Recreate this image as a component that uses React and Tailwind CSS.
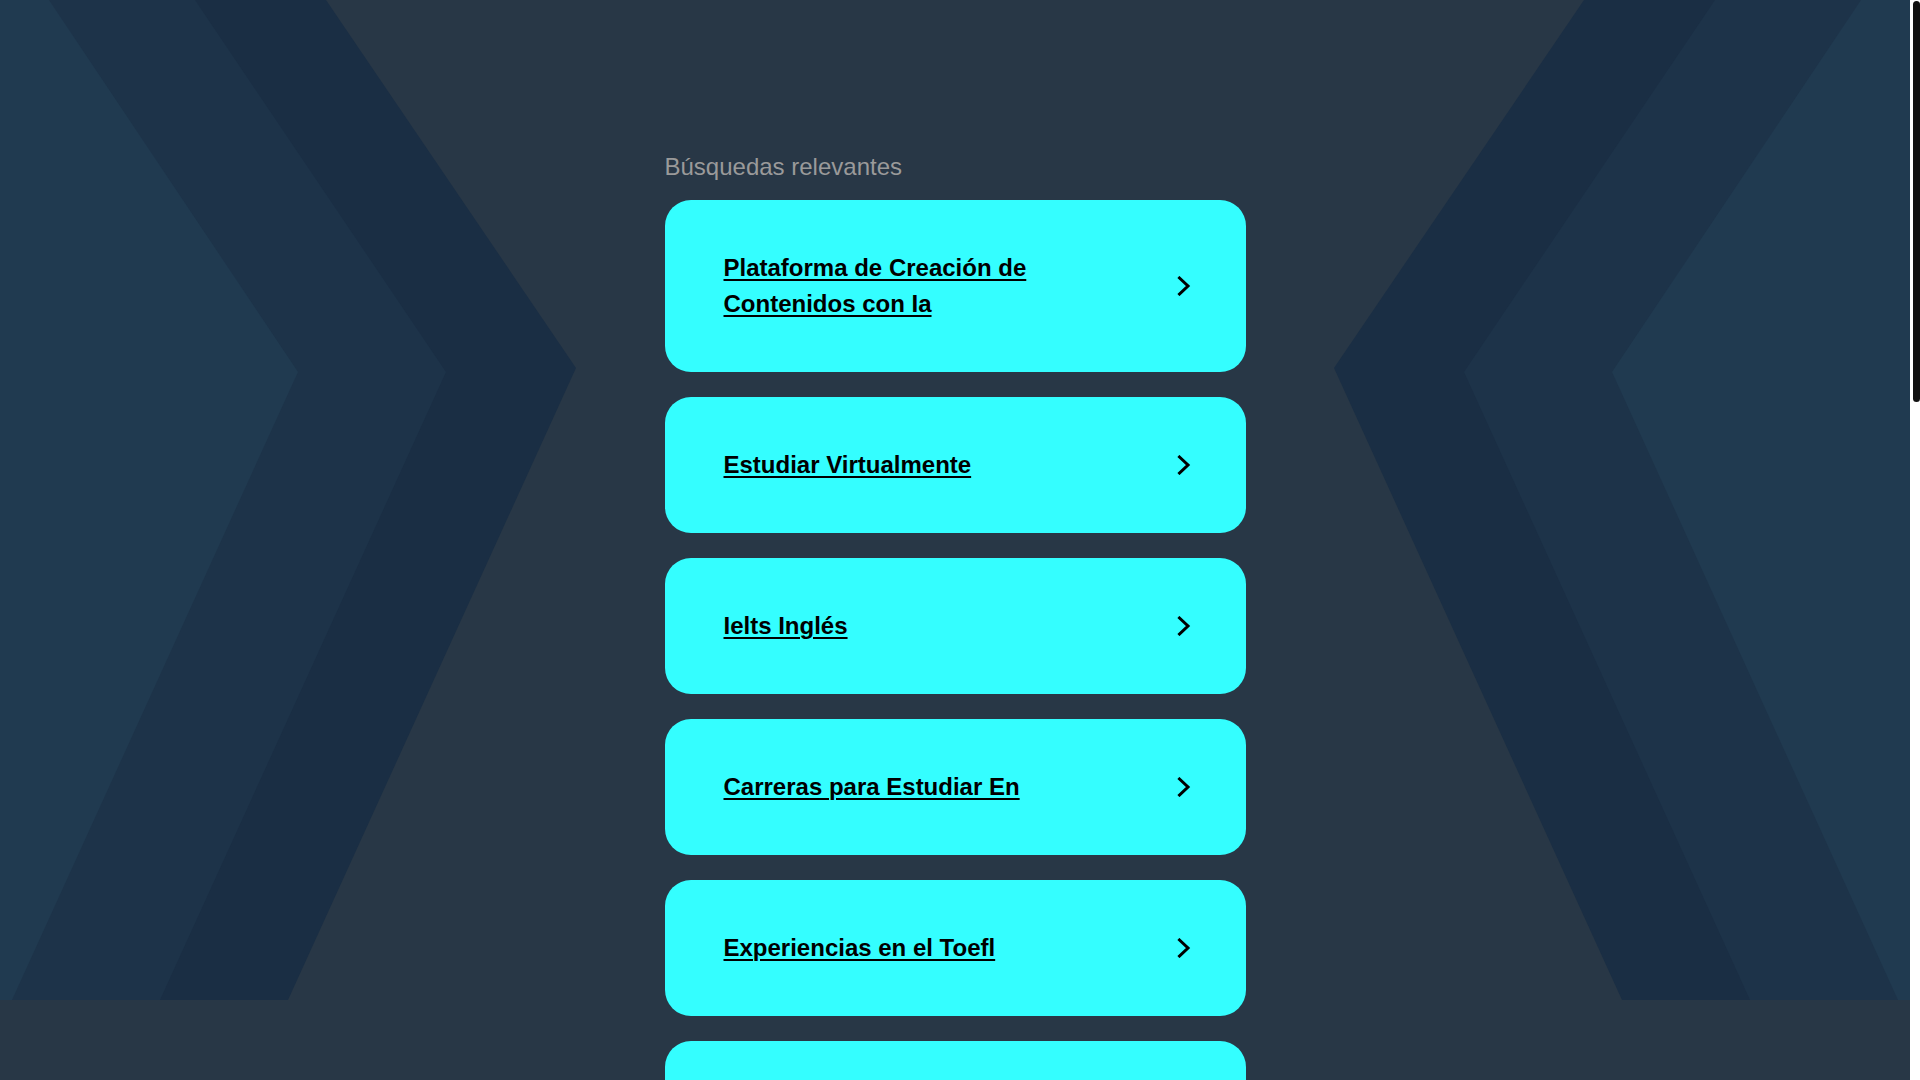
import React from "react";

const items = [
  "Plataforma de Creación de Contenidos con Ia",
  "Estudiar Virtualmente",
  "Ielts Inglés",
  "Carreras para Estudiar En",
  "Experiencias en el Toefl",
  "Cursos de Inglés Online",
];

const W = 1910;
const m = (pts) => pts.map(([x, y]) => `${W - x},${y}`).join(" ");
const p = (pts) => pts.map(([x, y]) => `${x},${y}`).join(" ");

const outer = [[0, 0], [326, 0], [576, 368], [288, 1000], [0, 1000]];
const middle = [[0, 0], [195, 0], [446, 372], [160, 1000], [0, 1000]];
const inner = [[0, 0], [49, 0], [298, 372], [12, 1000], [0, 1000]];

function Decor() {
  return (
    <svg
      className="absolute top-0 left-0 w-[1910px] h-[1000px] pointer-events-none"
      viewBox="0 0 1910 1000"
    >
      <polygon points={p(outer)} fill="#1a2e44" />
      <polygon points={p(middle)} fill="#1d3349" />
      <polygon points={p(inner)} fill="#203a50" />
      <polygon points={m(outer)} fill="#1a2e44" />
      <polygon points={m(middle)} fill="#1d3349" />
      <polygon points={m(inner)} fill="#203a50" />
    </svg>
  );
}

function Chevron() {
  return (
    <svg width="14" height="20" viewBox="0 0 14 20" className="shrink-0">
      <path
        d="M2.5 2 L11 10 L2.5 18"
        fill="none"
        stroke="#000"
        strokeWidth="3"
        strokeLinecap="square"
        strokeLinejoin="miter"
      />
    </svg>
  );
}

export default function App() {
  return (
    <div
      className="flex h-screen overflow-hidden bg-[#283746]"
      style={{ fontFamily: '"Liberation Sans", Arial, sans-serif' }}
    >
      <div className="relative flex-1 overflow-hidden">
        <Decor />
        <div className="relative w-[581px] mx-auto pt-[149px]">
          <div className="text-[24px] leading-[36px] text-[#9a9a9a] mb-[15px]">
            Búsquedas relevantes
          </div>
          <div className="flex flex-col gap-[25px]">
            {items.map((t) => (
              <a
                key={t}
                href="#"
                className="flex items-center justify-between rounded-[26px] bg-[#34feff] pl-[59px] pr-[55px] py-[50px]"
              >
                <span className="max-w-[400px] text-[24px] leading-[36px] font-bold text-black underline decoration-[2px] underline-offset-[3px]">
                  {t}
                </span>
                <Chevron />
              </a>
            ))}
          </div>
        </div>
      </div>
      <div className="w-[10px] shrink-0 bg-white pt-[1px] pl-[3px]">
        <div className="h-[401px] w-[7px] rounded-[4px] bg-[#111111]" />
      </div>
    </div>
  );
}
